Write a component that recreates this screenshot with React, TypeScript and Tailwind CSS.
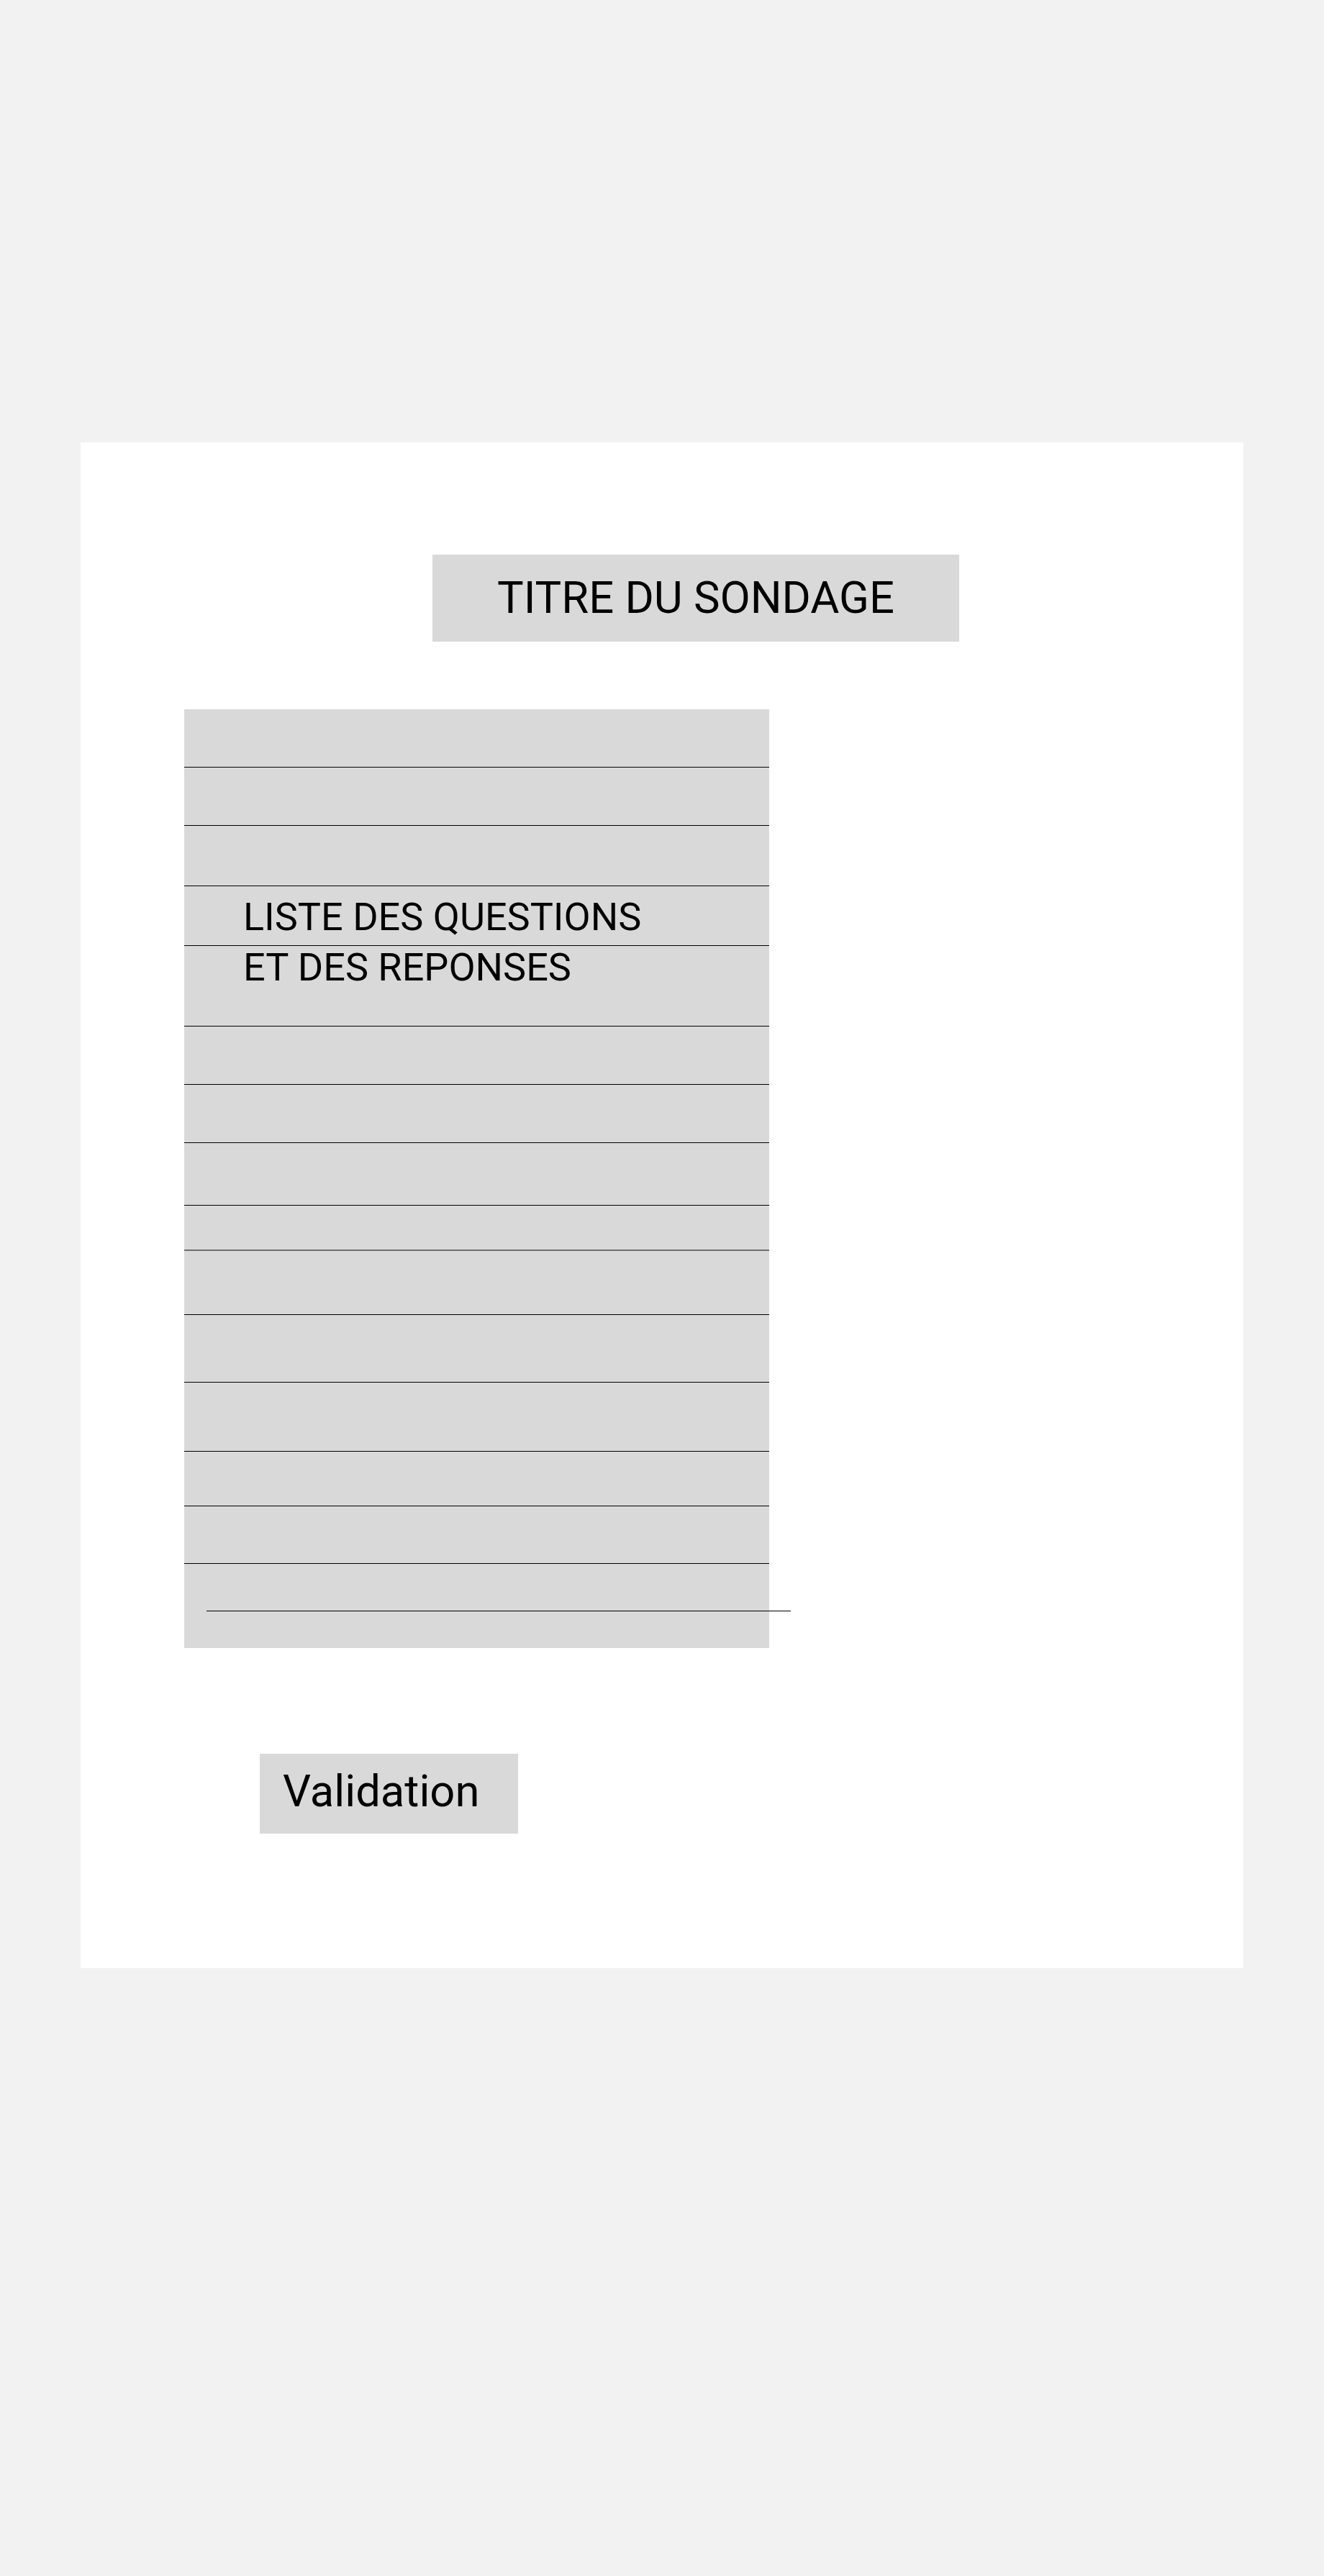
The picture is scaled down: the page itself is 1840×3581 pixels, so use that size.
const rows = [
  { h: 'h-[80px]', line: 'h-px bg-black' },
  { h: 'h-[80px]', line: 'h-px bg-black' },
  { h: 'h-[83px]', line: 'h-px bg-black' },
  { h: 'h-[82px]', line: 'h-px bg-black' },
  { h: 'h-[111px]', line: 'h-px bg-black' },
  { h: 'h-[80px]', line: 'h-px bg-black' },
  { h: 'h-[80px]', line: 'h-px bg-black' },
  { h: 'h-[86px]', line: 'h-px bg-black' },
  { h: 'h-[61px]', line: 'h-[2px] bg-[#6e6e6e]' },
  { h: 'h-[88px]', line: 'h-px bg-black' },
  { h: 'h-[93px]', line: 'h-px bg-black' },
  { h: 'h-[95px]', line: 'h-px bg-black' },
  { h: 'h-[75px]', line: 'h-px bg-black' },
  { h: 'h-[79px]', line: 'h-px bg-black' },
]

export default function App() {
  return (
    <div className="min-h-[3581px] w-full bg-[#f2f2f2] pt-[615px] pl-[112px] font-['Roboto',sans-serif] text-black">
      <div className="flex h-[2121px] w-[1616px] flex-col bg-white">
        <div className="ml-[489px] mt-[156px] flex h-[121px] w-[732px] items-center justify-center bg-[#d9d9d9] text-[61.5px]">
          TITRE DU SONDAGE
        </div>

        <div className="relative ml-[144px] mt-[94px] flex w-[813px] flex-col bg-[#d9d9d9]">
          {rows.map((row, i) => (
            <div key={i}>
              <div className={row.h} />
              <div className={row.line} />
            </div>
          ))}
          <div className="h-[117px]">
            <div className="ml-[31px] mt-[65px] h-px w-[812px] bg-black" />
          </div>

          <div className="absolute left-[82px] top-[254px] text-[54px] leading-[70px]">
            <p>LISTE DES QUESTIONS</p>
            <p>ET DES REPONSES</p>
          </div>
        </div>

        <div className="ml-[249px] mt-[147px] h-[111px] w-[359px] bg-[#d9d9d9] pl-[32px] pt-[6px] text-[61.5px]">
          Validation
        </div>
      </div>
    </div>
  )
}
